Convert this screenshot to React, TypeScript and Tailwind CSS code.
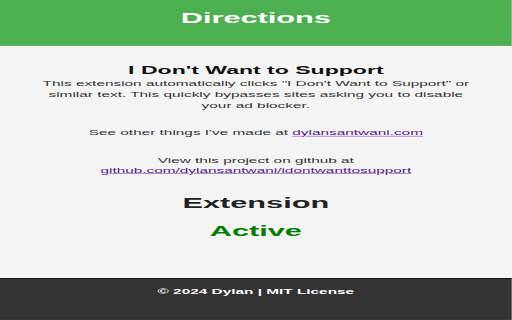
import React from "react";

export default function App() {
  return (
    <div className="w-[512px] h-[320px] overflow-hidden bg-[#f4f4f4]">
      <div
        className="w-[533px] h-[711px] origin-top-left scale-x-[0.96] scale-y-[0.45] flex flex-col bg-[#f4f4f4] text-[#333]"
        style={{ fontFamily: '"Liberation Sans", Arial, sans-serif' }}
      >
        <header className="h-[102px] pt-[24px] bg-[#4caf50]">
          <h1 className="text-[32px] leading-none font-bold text-white text-center">Directions</h1>
        </header>
        <main className="px-[38px] text-center">
          <h2 className="mt-[42px] text-[24px] leading-none font-bold text-[#111]">I Don't Want to Support</h2>
          <p className="mt-[7px] text-[16px] leading-[24px]">
            This extension automatically clicks "I Don't Want to Support" or similar text. This quickly bypasses sites
            asking you to disable your ad blocker.
          </p>
          <p className="mt-[37px] text-[16px] leading-[24px]">
            See other things I've made at{" "}
            <a href="#" className="text-[#551a8b] underline">dylansantwani.com</a>
          </p>
          <p className="mt-[38px] text-[16px] leading-[22px]">
            View this project on github at
            <br />
            <a href="#" className="text-[#551a8b] underline">github.com/dylansantwani/idontwanttosupport</a>
          </p>
          <h1 className="mt-[45px] text-[32px] leading-none font-bold text-[#222]">Extension</h1>
          <div className="mt-[31px] text-[32px] leading-none font-bold text-[#008000]">Active</div>
        </main>
        <footer className="mt-auto h-[93px] pt-[21px] bg-[#333] border-t-[2px] border-[#111] text-center">
          <p className="text-[16px] leading-none font-bold text-white">© 2024 Dylan | MIT License</p>
        </footer>
      </div>
    </div>
  );
}
